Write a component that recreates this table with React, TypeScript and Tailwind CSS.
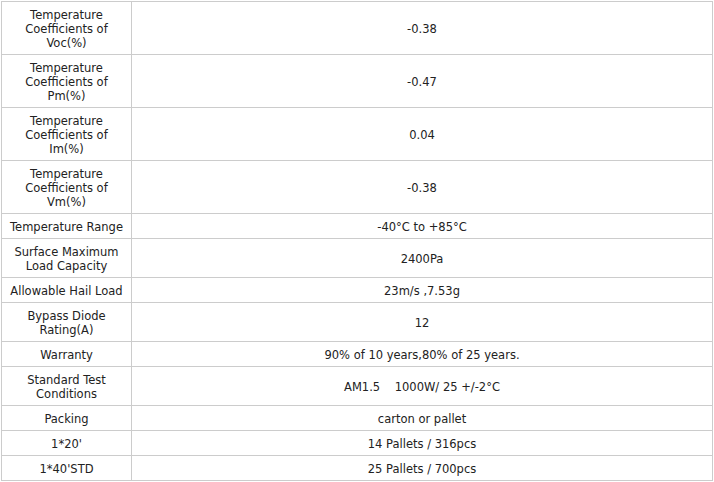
const rows: [string, string][] = [
  ['Temperature\nCoefficients of\nVoc(%)', '-0.38'],
  ['Temperature\nCoefficients of\nPm(%)', '-0.47'],
  ['Temperature\nCoefficients of\nIm(%)', '0.04'],
  ['Temperature\nCoefficients of\nVm(%)', '-0.38'],
  ['Temperature Range', '-40°C to +85°C'],
  ['Surface Maximum\nLoad Capacity', '2400Pa'],
  ['Allowable Hail Load', '23m/s ,7.53g'],
  ['Bypass Diode\nRating(A)', '12'],
  ['Warranty', '90% of 10 years,80% of 25 years.'],
  ['Standard Test\nConditions', 'AM1.5\u00a0\u00a0\u00a0 1000W/ 25 +/-2°C'],
  ['Packing', 'carton or pallet'],
  ["1*20'", '14 Pallets / 316pcs'],
  ["1*40'STD", '25 Pallets / 700pcs'],
];

export default function App() {
  return (
    <div className="bg-white w-[714px] h-[482px] pt-px pl-px font-['DejaVu_Sans',sans-serif] text-[11.5px] leading-[14px] text-[#222]">
      <table className="border-collapse table-fixed w-[712px]">
        <tbody>
          {rows.map(([label, value], i) => (
            <tr key={i}>
              <td className="w-[130px] border border-[#ccc] px-1 pt-[6px] pb-[4px] text-center whitespace-pre-line align-middle">
                {label}
              </td>
              <td className="border border-[#ccc] px-1 pt-[6px] pb-[4px] text-center align-middle whitespace-pre">
                {value}
              </td>
            </tr>
          ))}
        </tbody>
      </table>
    </div>
  );
}
